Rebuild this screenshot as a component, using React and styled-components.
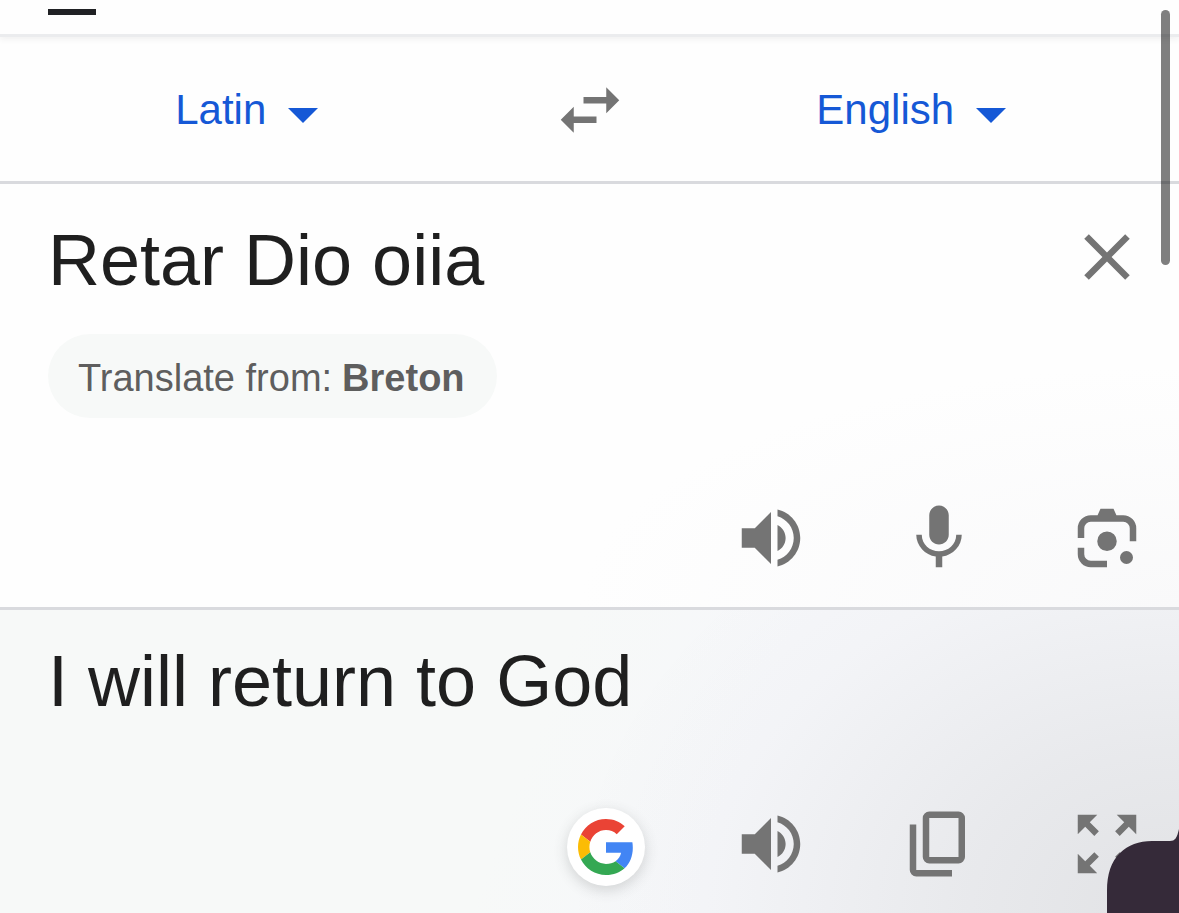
import React from "react";
import styled, { createGlobalStyle } from "styled-components";

const Global = createGlobalStyle`
  *, *::before, *::after { box-sizing: border-box; }
  body {
    margin: 0;
    background: #fefefe;
    font-family: "Liberation Sans", Arial, sans-serif;
    color: #1f1f1f;
  }
  button, select, textarea {
    margin: 0;
    padding: 0;
    border: 0;
    background: none;
    color: inherit;
    font: inherit;
  }
  button, select { cursor: pointer; }
`;

const Page = styled.div`
  position: relative;
  display: flex;
  flex-direction: column;
  min-height: 100vh;
  overflow: hidden;
`;

const TopBar = styled.header`
  display: flex;
  height: 37px;
  padding: 0 48px;
  border-bottom: 3px solid #ebecee;
  box-shadow: 0 2px 6px rgba(60, 64, 67, 0.08);
`;

const MenuButton = styled.button`
  display: flex;
  align-items: flex-start;
  width: 48px;
  padding-top: 9px;

  &::after {
    content: "";
    flex: 1;
    height: 6px;
    background: #202124;
  }
`;

const LanguageBar = styled.nav`
  display: grid;
  grid-template-columns: 1fr 150px 1fr;
  align-items: center;
  justify-items: center;
  height: 147px;
  padding-top: 2px;
  border-bottom: 3px solid #d9dade;
`;

const Picker = styled.label`
  display: inline-grid;
  align-items: center;
  color: #1558d6;

  > * { grid-area: 1 / 1; }
  > svg {
    justify-self: end;
    width: 72px;
    height: 72px;
    margin-top: 8px;
    pointer-events: none;
  }
`;

const LanguageSelect = styled.select`
  appearance: none;
  field-sizing: content;
  padding-right: 73px;
  outline: none;
  font-size: 42px;
  line-height: 60px;
`;

const IconButton = styled.button`
  display: block;
  flex: none;
  width: 78px;
  height: 78px;
  color: #747474;

  svg { display: block; width: 100%; height: 100%; }
`;

const Panel = styled.section`
  display: flex;
  flex-direction: column;
  align-items: flex-start;
  padding: 34px 33px 30px 48px;
`;

const SourcePanel = styled(Panel)`
  border-bottom: 3px solid #d9dade;
  background: radial-gradient(ellipse 600px 240px at 100% 100%, #f9f9fa, #fefefe);
`;

const ResultPanel = styled(Panel)`
  flex: 1;
  padding-top: 29px;
  background:
    radial-gradient(
      ellipse 620px 480px at 100% 100%,
      rgba(40, 40, 40, 0.1) 0%,
      rgba(40, 42, 44, 0.065) 35%,
      rgba(40, 44, 50, 0.015) 75%,
      rgba(40, 44, 50, 0) 100%
    ),
    linear-gradient(110deg, #f7f9f8 45%, #f6f7fa 62%);
`;

const SourceRow = styled.div`
  display: flex;
  align-items: flex-start;
  width: 100%;
`;

const SourceText = styled.textarea`
  flex: 1;
  min-width: 0;
  height: 84px;
  resize: none;
  outline: none;
  overflow: hidden;
  font-size: 72px;
  line-height: 84px;
`;

const ResultText = styled.p`
  margin: 0;
  font-size: 72px;
  line-height: 84px;
`;

const SuggestionChip = styled.button`
  display: flex;
  align-items: center;
  gap: 10px;
  height: 84px;
  margin-top: 32px;
  padding: 4px 32px 0 30px;
  border-radius: 42px;
  background: #f7f9f8;
  color: #5e5e5e;
  font-size: 38px;
`;

const Actions = styled.div`
  display: flex;
  justify-content: flex-end;
  gap: 90px;
  width: 100%;
  margin-top: auto;
  padding-top: 81px;
`;

const SearchBubble = styled.button`
  position: absolute;
  right: 534px;
  bottom: 27px;
  z-index: 2;
  display: grid;
  place-items: center;
  width: 78px;
  height: 78px;
  border-radius: 50%;
  background: #fff;
  box-shadow: 0 4px 14px rgba(60, 64, 67, 0.2);

  svg { width: 56px; height: 56px; }
`;

const CornerShape = styled.svg`
  position: absolute;
  right: 0;
  bottom: 0;
  z-index: 2;
  width: 72px;
  height: 84px;
  pointer-events: none;
`;

const ScrollThumb = styled.div`
  position: absolute;
  top: 10px;
  right: 9px;
  z-index: 3;
  width: 9px;
  height: 255px;
  border-radius: 5px;
  background: rgba(0, 0, 0, 0.5);
`;

const PATHS = {
  caret: "M7 10h10l-5 5z",
  swap: "M7 11l-4 4 4 4v-3h7v-2H7zM21 9l-4-4v3h-7v2h7v3z",
  close:
    "M19 6.41 17.59 5 12 10.59 6.41 5 5 6.41 10.59 12 5 17.59 6.41 19 12 13.41 17.59 19 19 17.59 13.41 12z",
  volume:
    "M3 9v6h4l5 5V4L7 9H3zm13.5 3c0-1.77-1.02-3.29-2.5-4.03v8.05c1.48-.73 2.5-2.25 2.5-4.02zM14 3.23v2.06c2.89.86 5 3.54 5 6.71s-2.11 5.85-5 6.71v2.06c4.01-.91 7-4.49 7-8.77s-2.99-7.86-7-8.77z",
  mic: "M12 14c1.66 0 3-1.34 3-3V5c0-1.66-1.34-3-3-3S9 3.34 9 5v6c0 1.66 1.34 3 3 3zM17.3 11c0 3-2.54 5.1-5.3 5.1S6.7 14 6.7 11H5c0 3.41 2.72 6.23 6 6.72V21h2v-3.28c3.28-.48 6-3.3 6-6.72z",
  lens: "M3 12V9a4 4 0 0 1 4-4h2.1L10 3h4l.9 2H17a4 4 0 0 1 4 4v4h-2V9a2 2 0 0 0-2-2H7a2 2 0 0 0-2 2v3zM3 15h2v2a2 2 0 0 0 2 2h5v2H7a4 4 0 0 1-4-4zM9 13a3 3 0 1 0 6 0 3 3 0 1 0-6 0zM16 18a2 2 0 1 0 4 0 2 2 0 1 0-4 0z",
  copy: "M9 2h9a2 2 0 0 1 2 2v12a2 2 0 0 1-2 2H9a2 2 0 0 1-2-2V4a2 2 0 0 1 2-2zm0 2v12h9V4zM3 6h2v14h11v2H5a2 2 0 0 1-2-2z",
  expand:
    "M3 3h6L6.7 5.3l2.8 2.8-1.4 1.4-2.8-2.8L3 9zM21 3h-6l2.3 2.3-2.8 2.8 1.4 1.4 2.8-2.8L21 9zM3 21h6l-2.3-2.3 2.8-2.8-1.4-1.4-2.8 2.8L3 15zM21 21h-6l2.3-2.3-2.8-2.8 1.4-1.4 2.8 2.8L21 15z",
};

function Icon({ name }) {
  return (
    <svg viewBox="0 0 24 24" fill="currentColor" fillRule="evenodd" aria-hidden="true">
      <path d={PATHS[name]} />
    </svg>
  );
}

function ActionButton({ icon, label }) {
  return (
    <IconButton type="button" aria-label={label}>
      <Icon name={icon} />
    </IconButton>
  );
}

function LanguagePicker({ label, value }) {
  return (
    <Picker>
      <LanguageSelect aria-label={label} defaultValue={value}>
        <option>{value}</option>
      </LanguageSelect>
      <Icon name="caret" />
    </Picker>
  );
}

function GoogleLogo() {
  return (
    <svg viewBox="0 0 48 48" aria-hidden="true">
      <path fill="#EA4335" d="M24 9.5c3.54 0 6.71 1.22 9.21 3.6l6.85-6.85C35.9 2.38 30.47 0 24 0 14.62 0 6.51 5.38 2.56 13.22l7.98 6.19C12.43 13.72 17.74 9.5 24 9.5z" />
      <path fill="#4285F4" d="M46.98 24.55c0-1.57-.15-3.09-.38-4.55H24v9.02h12.94c-.58 2.96-2.26 5.48-4.78 7.18l7.73 6c4.51-4.18 7.09-10.36 7.09-17.65z" />
      <path fill="#FBBC05" d="M10.53 28.59c-.48-1.45-.76-2.99-.76-4.59s.27-3.14.76-4.59l-7.98-6.19C.92 16.46 0 20.12 0 24s.92 7.54 2.56 10.78l7.97-6.19z" />
      <path fill="#34A853" d="M24 48c6.48 0 11.93-2.13 15.89-5.81l-7.73-6c-2.15 1.45-4.92 2.3-8.16 2.3-6.26 0-11.57-4.22-13.47-9.91l-7.98 6.19C6.51 42.62 14.62 48 24 48z" />
    </svg>
  );
}

export default function App() {
  return (
    <>
      <Global />
      <Page>
        <TopBar>
          <MenuButton type="button" aria-label="Menu" />
        </TopBar>

        <LanguageBar aria-label="Languages">
          <LanguagePicker label="Source language" value="Latin" />
          <ActionButton icon="swap" label="Swap languages" />
          <LanguagePicker label="Target language" value="English" />
        </LanguageBar>

        <SourcePanel>
          <SourceRow>
            <SourceText aria-label="Source text" rows={1} spellCheck={false} defaultValue="Retar Dio oiia" />
            <ActionButton icon="close" label="Clear text" />
          </SourceRow>
          <SuggestionChip type="button">
            <span>Translate from:</span>
            <b>Breton</b>
          </SuggestionChip>
          <Actions>
            <ActionButton icon="volume" label="Listen to source" />
            <ActionButton icon="mic" label="Speak" />
            <ActionButton icon="lens" label="Translate with camera" />
          </Actions>
        </SourcePanel>

        <ResultPanel>
          <ResultText>I will return to God</ResultText>
          <Actions>
            <ActionButton icon="volume" label="Listen to translation" />
            <ActionButton icon="copy" label="Copy translation" />
            <ActionButton icon="expand" label="Full screen" />
          </Actions>
        </ResultPanel>

        <SearchBubble type="button" aria-label="Search with Google">
          <GoogleLogo />
        </SearchBubble>
        <CornerShape viewBox="0 0 72 84" aria-hidden="true">
          <path fill="#352a39" d="M0 84V62C0 45 4 33 13 24 21 16 32 12 45 12h18c5 0 7-3 9-12v84z" />
        </CornerShape>
        <ScrollThumb />
      </Page>
    </>
  );
}
